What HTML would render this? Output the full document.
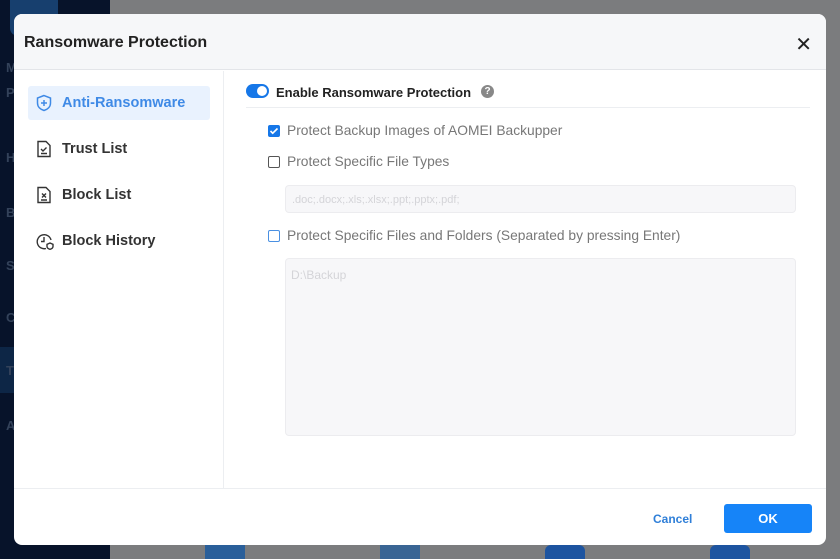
<!DOCTYPE html>
<html><head><meta charset="utf-8"><style>
*{box-sizing:border-box;margin:0;padding:0}
body{width:840px;height:559px;overflow:hidden;background:#7b7c7e;font-family:"Liberation Sans",sans-serif;position:relative}
.side{position:absolute;left:0;top:0;width:110px;height:559px;background:#07132a}
.sl{position:absolute;left:6px;color:#33425a;font-size:13px;font-weight:bold}
.dlg{position:absolute;left:14px;top:14px;width:812px;height:531px;background:#fff;border-radius:8px;overflow:hidden}
.hdr{height:56px;background:#f6f7f9;border-bottom:1px solid #e3e5e9;position:relative}
.hdr h1{position:absolute;left:10px;top:20px;font-size:16px;font-weight:bold;color:#222}
.x{position:absolute;right:14px;top:18px;font-size:20px;color:#222}
.nav{position:absolute;left:0;top:57px;width:210px;height:417px;border-right:1px solid #eceef1}
.it{position:absolute;left:14px;width:182px;height:34px;font-size:14.5px;font-weight:bold;color:#333;border-radius:3px}
.it span{position:absolute;left:34px;top:9px}
.it svg{position:absolute;left:7px;top:8px}
.act{background:#e9f2fe;color:#3f8ae6}
.foot{position:absolute;left:0;top:474px;width:812px;border-top:1px solid #eceef1;height:57px}
.t{position:absolute;font-size:13.8px;color:#777}
.cb{position:absolute;width:12px;height:12px;border:1.5px solid #555;border-radius:2px}
.box{position:absolute;background:#f7f7f9;border:1px solid #ececef;border-radius:4px}
</style></head><body>
<div class="side">
<div style="position:absolute;left:10px;top:-10px;width:48px;height:46px;background:#173f6e;border-radius:8px"></div>
<div class="sl" style="top:60px">ME</div><div class="sl" style="top:85px">Pr</div>
<div class="sl" style="top:150px">H</div><div class="sl" style="top:205px">B</div><div class="sl" style="top:258px">S</div><div class="sl" style="top:310px">C</div>
<div style="position:absolute;left:0;top:347px;width:110px;height:46px;background:#0d2646"></div>
<div class="sl" style="top:363px">T</div><div class="sl" style="top:418px">A</div>
</div>
<div style="position:absolute;left:205px;top:545px;width:40px;height:14px;background:#2a5f9a"></div>
<div style="position:absolute;left:380px;top:545px;width:40px;height:14px;background:#2a5f9a;opacity:.8"></div>
<div style="position:absolute;left:545px;top:545px;width:40px;height:14px;background:#1d54a0;border-radius:6px 6px 0 0"></div>
<div style="position:absolute;left:710px;top:545px;width:40px;height:14px;background:#1d54a0;border-radius:6px 6px 0 0"></div>
<div class="dlg">
<div class="hdr"><h1>Ransomware Protection</h1><div class="x">✕</div></div>
<div class="nav">
<div class="it act" style="top:15px"><svg width="18" height="18" viewBox="0 0 18 18" fill="none" stroke="#3f8ae6" stroke-width="1.5"><path d="M9 1.5L2.5 4v5c0 4 3 6.5 6.5 7.5 3.5-1 6.5-3.5 6.5-7.5V4z"/><path d="M9 6v6M6 9h6"/></svg><span>Anti-Ransomware</span></div>
<div class="it" style="top:61px"><svg width="18" height="18" viewBox="0 0 18 18" fill="none" stroke="#333" stroke-width="1.4"><path d="M3 1.5h8l4 4v11H3z"/><path d="M6 9l2 2 3.5-3.5M6 13.5h6"/></svg><span>Trust List</span></div>
<div class="it" style="top:107px"><svg width="18" height="18" viewBox="0 0 18 18" fill="none" stroke="#333" stroke-width="1.4"><path d="M3 1.5h8l4 4v11H3z"/><path d="M7 7.5l4 4M11 7.5l-4 4M6 14h6"/></svg><span>Block List</span></div>
<div class="it" style="top:153px"><svg width="20" height="20" viewBox="0 0 20 20" fill="none" stroke="#333" stroke-width="1.4"><path d="M11 16.5A7 7 0 1 1 16 8"/><path d="M9 5v4.5H6"/><path d="M15 11l-3 1.3v2.2c0 1.3 1.3 2.3 3 2.8 1.7-.5 3-1.5 3-2.8v-2.2z"/></svg><span>Block History</span></div>
</div>
<div style="position:absolute;left:232px;top:70px;width:23px;height:14px;background:#1677e8;border-radius:7px"><div style="position:absolute;right:2px;top:2px;width:10px;height:10px;background:#fff;border-radius:50%"></div></div>
<div class="t" style="left:262px;top:71px;color:#222;font-weight:bold;font-size:13px">Enable Ransomware Protection</div>
<div style="position:absolute;left:467px;top:71px;width:13px;height:13px;border-radius:50%;background:#888;color:#fff;font-size:10px;font-weight:bold;text-align:center;line-height:13px">?</div>
<div style="position:absolute;left:232px;top:93px;width:564px;height:1px;background:#eceef1"></div>
<div class="cb" style="left:254px;top:111px;background:#1677e8;border-color:#1677e8"><svg width="10" height="10" viewBox="0 0 10 10" style="position:absolute;left:0;top:0"><path d="M1.5 5l2.2 2.2L8.5 2.5" stroke="#fff" stroke-width="1.6" fill="none"/></svg></div>
<div class="t" style="left:273px;top:109px">Protect Backup Images of AOMEI Backupper</div>
<div class="cb" style="left:254px;top:142px"></div>
<div class="t" style="left:273px;top:140px">Protect Specific File Types</div>
<div class="box" style="left:271px;top:171px;width:511px;height:28px"><span style="position:absolute;left:6px;top:8px;font-size:11px;color:#d4d4d8">.doc;.docx;.xls;.xlsx;.ppt;.pptx;.pdf;</span></div>
<div class="cb" style="left:254px;top:216px;border-color:#4a90e2"></div>
<div class="t" style="left:273px;top:214px">Protect Specific Files and Folders (Separated by pressing Enter)</div>
<div class="box" style="left:271px;top:244px;width:511px;height:178px"><span style="position:absolute;left:5px;top:9px;font-size:12px;color:#d4d4d8">D:\Backup</span></div>
<div class="foot">
<div style="position:absolute;left:639px;top:23px;font-size:12px;font-weight:bold;color:#2f7fd8">Cancel</div>
<div style="position:absolute;left:710px;top:15px;width:88px;height:29px;background:#1684f8;border-radius:3px;color:#fff;font-size:13px;font-weight:bold;text-align:center;line-height:29px">OK</div>
</div>
</div>
</body></html>
